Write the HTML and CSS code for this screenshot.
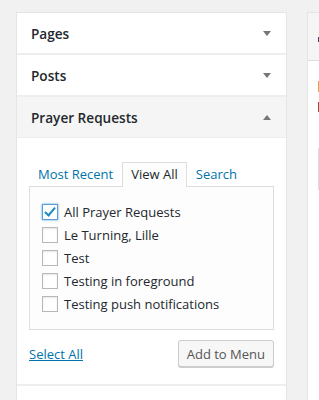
FILE: index.html
```html
<!DOCTYPE html>
<html lang="en">
<head>
  <meta charset="UTF-8" />
  <title>Menus</title>
  <link rel="stylesheet" href="styles.css">
</head>
<body>
  <div class="page">
    <div class="sidebar">
      <div class="section">
        <div class="section-head">
          <h3>Pages</h3>
          <span class="arrow down"></span>
        </div>
      </div>
      <div class="section">
        <div class="section-head">
          <h3>Posts</h3>
          <span class="arrow down"></span>
        </div>
      </div>
      <div class="section open">
        <div class="section-head">
          <h3>Prayer Requests</h3>
          <span class="arrow up"></span>
        </div>
        <div class="section-body">
          <ul class="tabs">
            <li><a href="#">Most Recent</a></li>
            <li class="active">View All</li>
            <li><a href="#">Search</a></li>
          </ul>
          <div class="tab-panel">
            <label class="item"><span class="check checked"></span>All Prayer Requests</label>
            <label class="item"><span class="check"></span>Le Turning, Lille</label>
            <label class="item"><span class="check"></span>Test</label>
            <label class="item"><span class="check"></span>Testing in foreground</label>
            <label class="item"><span class="check"></span>Testing push notifications</label>
          </div>
          <div class="actions">
            <a href="#" class="select-all">Select All</a>
            <button class="btn">Add to Menu</button>
          </div>
        </div>
      </div>
      <div class="section">
        <div class="section-head">
          <h3>Custom Links</h3>
        </div>
      </div>
    </div>

    <div class="menu-area">
      <div class="menu-head"><span class="mark dark"></span></div>
      <div class="menu-body">
        <span class="mark orange"></span>
        <span class="mark red"></span>
        <span class="field"></span>
      </div>
    </div>
  </div>
</body>
</html>
```

FILE: styles.css
```css
body {
  margin: 0;
  background: #f1f1f1;
  font-family: "Open Sans", "Noto Sans", sans-serif;
  color: #23282d;
  height: 400px;
  overflow: hidden;
}

.page {
  display: flex;
  align-items: flex-start;
  padding: 12px 0 0 16px;
  gap: 20px;
}

.sidebar {
  width: 269px;
  flex-shrink: 0;
  background: #fff;
  border: 1px solid #e5e5e5;
  border-bottom: none;
}

.section {
  border-bottom: 2px solid #eee;
}

.section-head {
  height: 40px;
  display: flex;
  align-items: center;
  justify-content: space-between;
  padding: 0 15px 0 14px;
}

.section.open .section-head {
  background: #f5f5f5;
  border-bottom: 1px solid #eee;
}

.section-head h3 {
  margin: 0;
  font-size: 13.6px;
  font-weight: 600;
}

.arrow {
  width: 0;
  height: 0;
  border-left: 4px solid transparent;
  border-right: 4px solid transparent;
}

.arrow.down { border-top: 5px solid #72777c; }
.arrow.up { border-bottom: 5px solid #72777c; }

.section-body {
  padding: 24px 12px 17px 12px;
}

.tabs {
  list-style: none;
  margin: 0;
  padding: 0;
  display: flex;
  font-size: 13px;
  position: relative;
  z-index: 1;
}

.tabs li {
  padding: 3px 8px 4px;
  border: 1px solid transparent;
  border-bottom: none;
  line-height: 16px;
}

.tabs li a {
  color: #0073aa;
  text-decoration: none;
}

.tabs li.active {
  background: #fdfdfd;
  border-color: #ddd;
  margin-bottom: -1px;
  padding-bottom: 5px;
}

.tab-panel {
  border: 1px solid #ddd;
  background: #fdfdfd;
  padding: 17px 12px 10px 12px;
  height: 144px;
  box-sizing: border-box;
  display: flex;
  flex-direction: column;
  gap: 7px;
}

.item {
  display: flex;
  align-items: center;
  gap: 6px;
  font-size: 13px;
  line-height: 16px;
}

.check {
  width: 14px;
  height: 14px;
  border: 1px solid #b4b9be;
  background: #fff;
  box-shadow: inset 0 1px 2px rgba(0,0,0,0.1);
  position: relative;
  flex-shrink: 0;
}

.check.checked {
  border-color: #5b9dd9;
  box-shadow: 0 0 2px rgba(30,140,190,0.8);
}

.check.checked::after {
  content: "";
  position: absolute;
  left: 4px;
  top: 0;
  width: 4px;
  height: 9px;
  border: solid #1e8cbe;
  border-width: 0 2.5px 2.5px 0;
  transform: rotate(40deg);
}

.actions {
  display: flex;
  justify-content: space-between;
  align-items: center;
  margin-top: 10px;
}

.select-all {
  color: #0073aa;
  font-size: 13px;
  text-decoration: underline;
}

.btn {
  font-family: inherit;
  font-size: 13px;
  color: #555;
  background: #f7f7f7;
  border: 1px solid #ccc;
  border-radius: 3px;
  box-shadow: 0 1px 0 #ccc;
  height: 27px;
  padding: 0 8px;
}

.menu-area {
  width: 60px;
  flex-shrink: 0;
  background: #fff;
  border: 1px solid #e5e5e5;
  height: 400px;
}

.menu-head {
  height: 48px;
  background: #f5f5f5;
  border-bottom: 1px solid #ddd;
  padding: 24px 0 0 10px;
  box-sizing: border-box;
}

.menu-body {
  padding: 20px 0 0 10px;
  display: flex;
  flex-direction: column;
}

.mark {
  display: block;
  width: 3px;
}

.mark.dark { height: 5px; background: #5a3c6e; }
.mark.orange { height: 11px; background: #e6a04a; }
.mark.red { height: 10px; background: #a8443a; margin-top: 10px; }

.field {
  display: block;
  width: 20px;
  height: 40px;
  border: 1px solid #ddd;
  margin-top: 36px;
}
```
